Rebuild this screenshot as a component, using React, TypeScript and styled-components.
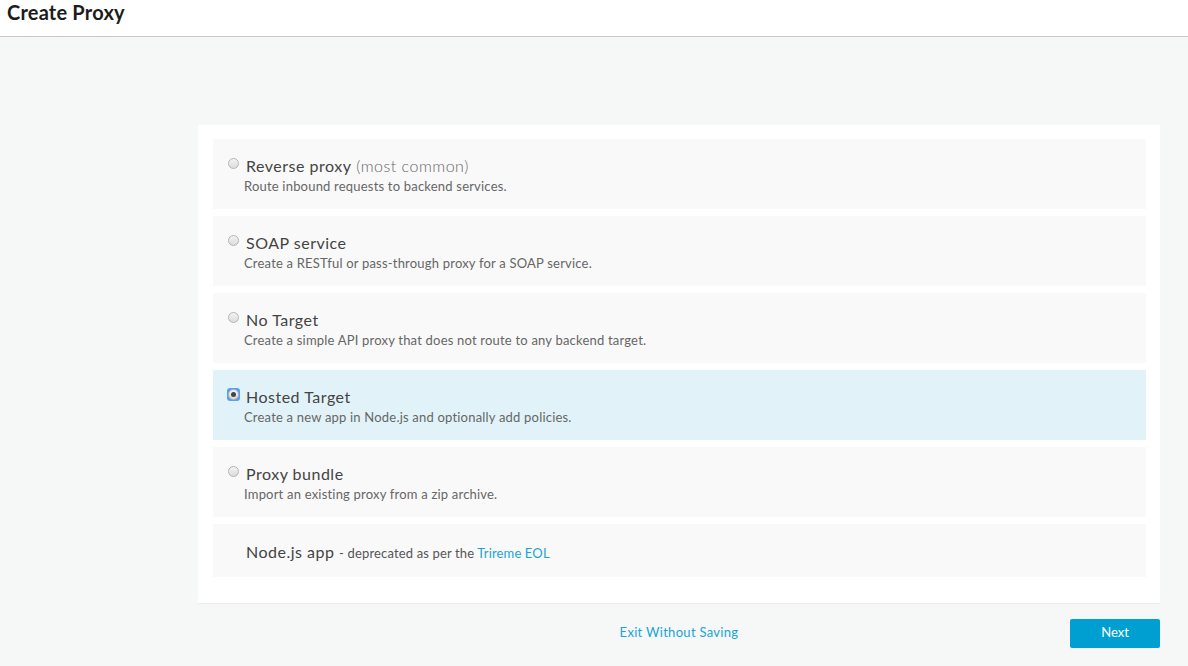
import React, { useState } from "react";
import styled, { createGlobalStyle } from "styled-components";

const Global = createGlobalStyle`
  html, body { margin: 0; padding: 0; }
  body { font-family: Lato, "Open Sans", Arial, sans-serif; background: #f6f8f8; }
  * { box-sizing: border-box; }
`;

const Page = styled.div`
  min-height: 666px;
  display: flex;
  flex-direction: column;
  background: #f6f8f8;
`;

const Header = styled.header`
  height: 37px;
  background: #ffffff;
  border-bottom: 1px solid #c8c8c8;
  display: flex;
  align-items: flex-start;
  padding: 1px 7px 0;
`;

const Title = styled.h1`
  margin: 0;
  font-size: 20px;
  font-weight: 700;
  letter-spacing: 0.2px;
  color: #1c1c1c;
  line-height: 22px;
`;

const Main = styled.main`
  padding: 88px 28px 0 198px;
  display: flex;
  flex-direction: column;
`;

const Card = styled.section`
  background: #ffffff;
  padding: 14px 14px 26px 15px;
  display: flex;
  flex-direction: column;
  gap: 7px;
  border-bottom: 1px solid #ececec;
`;

const Option = styled.label<{ $selected?: boolean; $compact?: boolean }>`
  display: grid;
  grid-template-columns: 18px 1fr;
  column-gap: 0;
  height: ${(p) => (p.$compact ? "53px" : "70px")};
  padding: ${(p) => (p.$compact ? "18px 15px 0" : "17px 15px 0")};
  background: ${(p) => (p.$selected ? "#e1f3f8" : "#f9f9f9")};
  cursor: pointer;
`;

const RadioWrap = styled.span<{ $focus?: boolean }>`
  width: 13px;
  height: 13px;
  margin: 1px 0 0 -1px;
  display: flex;
  align-items: center;
  justify-content: center;
  border-radius: 3px;
  background: ${(p) => (p.$focus ? "#5aa0f0" : "transparent")};
`;

const Radio = styled.span<{ $checked?: boolean }>`
  width: 11px;
  height: 11px;
  border-radius: 50%;
  border: 1px solid #b5b5b5;
  background: linear-gradient(#f3f3f3, #dcdcdc);
  display: flex;
  align-items: center;
  justify-content: center;
  &::after {
    content: "";
    display: ${(p) => (p.$checked ? "block" : "none")};
    width: 5px;
    height: 5px;
    border-radius: 50%;
    background: #444;
  }
`;

const Text = styled.span`
  display: flex;
  flex-direction: column;
`;

const OptionTitle = styled.span`
  font-size: 16px;
  line-height: 18px;
  letter-spacing: 0.5px;
  color: #444;
  margin-top: 1px;
`;

const Muted = styled.span`
  font-weight: 300;
  color: #666;
`;

const Desc = styled.span`
  font-size: 13px;
  line-height: 16px;
  letter-spacing: 0.2px;
  color: #666;
  margin-top: 3px;
  margin-left: -2px;
`;

const Note = styled.span`
  font-size: 13px;
  letter-spacing: 0.15px;
  color: #555;
`;

const Link = styled.a`
  color: #1aa3d6;
  text-decoration: none;
`;

const Footer = styled.footer`
  display: grid;
  grid-template-columns: 1fr auto 1fr;
  align-items: center;
  padding: 15px 0 18px;
`;

const ExitLink = styled.a`
  grid-column: 2;
  font-size: 13px;
  letter-spacing: 0.3px;
  color: #1aa3d6;
  text-decoration: none;
  cursor: pointer;
  margin-top: -3px;
`;

const NextButton = styled.button`
  grid-column: 3;
  justify-self: end;
  width: 90px;
  height: 29px;
  border: none;
  border-radius: 2px;
  background: #009fd1;
  color: #ffffff;
  font-family: Lato, Arial, sans-serif;
  font-size: 13px;
  padding: 0 0 3px;
  cursor: pointer;
`;

const options = [
  { id: "reverse", title: "Reverse proxy", extra: "(most common)", desc: "Route inbound requests to backend services." },
  { id: "soap", title: "SOAP service", desc: "Create a RESTful or pass-through proxy for a SOAP service." },
  { id: "none", title: "No Target", desc: "Create a simple API proxy that does not route to any backend target." },
  { id: "hosted", title: "Hosted Target", desc: "Create a new app in Node.js and optionally add policies." },
  { id: "bundle", title: "Proxy bundle", desc: "Import an existing proxy from a zip archive." },
];

export default function App() {
  const [selected, setSelected] = useState("hosted");
  return (
    <Page>
      <Global />
      <Header>
        <Title>Create Proxy</Title>
      </Header>
      <Main>
        <Card>
          {options.map((o) => (
            <Option key={o.id} $selected={selected === o.id} onClick={() => setSelected(o.id)}>
              <RadioWrap $focus={selected === o.id}>
                <Radio $checked={selected === o.id} />
              </RadioWrap>
              <Text>
                <OptionTitle>
                  {o.title}
                  {o.extra ? <Muted> {o.extra}</Muted> : null}
                </OptionTitle>
                <Desc>{o.desc}</Desc>
              </Text>
            </Option>
          ))}
          <Option $compact>
            <span />
            <Text>
              <OptionTitle>
                Node.js app <Note>- deprecated as per the <Link>Trireme EOL</Link></Note>
              </OptionTitle>
            </Text>
          </Option>
        </Card>
        <Footer>
          <ExitLink>Exit Without Saving</ExitLink>
          <NextButton>Next</NextButton>
        </Footer>
      </Main>
    </Page>
  );
}
